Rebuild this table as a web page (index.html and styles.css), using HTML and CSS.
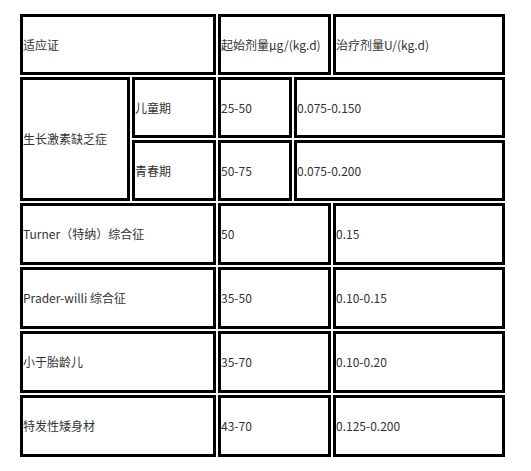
FILE: index.html
```html
<!DOCTYPE html>
<html lang="zh">
<head>
<meta charset="utf-8">
<link rel="stylesheet" href="styles.css">
</head>
<body>
<table class="dose">
  <colgroup>
    <col class="c-a">
    <col class="c-b">
    <col class="c-c">
    <col class="c-d">
    <col class="c-e">
  </colgroup>
  <tr class="r-head">
    <td colspan="2">适应证</td>
    <td colspan="2">起始剂量μg/(kg.d)</td>
    <td>治疗剂量U/(kg.d)</td>
  </tr>
  <tr class="r-sub">
    <td rowspan="2">生长激素缺乏症</td>
    <td>儿童期</td>
    <td>25-50</td>
    <td colspan="2">0.075-0.150</td>
  </tr>
  <tr class="r-sub">
    <td>青春期</td>
    <td>50-75</td>
    <td colspan="2">0.075-0.200</td>
  </tr>
  <tr class="r-body">
    <td colspan="2">Turner（特纳）综合征</td>
    <td colspan="2">50</td>
    <td>0.15</td>
  </tr>
  <tr class="r-body">
    <td colspan="2">Prader-willi 综合征</td>
    <td colspan="2">35-50</td>
    <td>0.10-0.15</td>
  </tr>
  <tr class="r-body">
    <td colspan="2">小于胎龄儿</td>
    <td colspan="2">35-70</td>
    <td>0.10-0.20</td>
  </tr>
  <tr class="r-body">
    <td colspan="2">特发性矮身材</td>
    <td colspan="2">43-70</td>
    <td>0.125-0.200</td>
  </tr>
</table>
</body>
</html>
```
FILE: styles.css
```css
html, body {
  margin: 0;
  padding: 0;
  background: #fff;
}

body {
  font-family: "Noto Sans CJK SC", "Noto Sans", sans-serif;
  font-size: 12px;
  color: #333;
}

.dose {
  table-layout: fixed;
  border-collapse: separate;
  border-spacing: 2px;
  width: 489px;
  margin: 12px 0 0 18px;
}

.c-a { width: 110px; }
.c-b { width: 84px; }
.c-c { width: 74px; }
.c-d { width: 37px; }
.c-e { width: 172px; }

.dose td {
  border: 3px solid #000;
  padding: 0;
  vertical-align: middle;
  text-align: left;
  line-height: 16px;
  white-space: nowrap;
  overflow: hidden;
}

.r-head { height: 61px; }
.r-sub { height: 61px; }
.r-body { height: 62px; }
```
